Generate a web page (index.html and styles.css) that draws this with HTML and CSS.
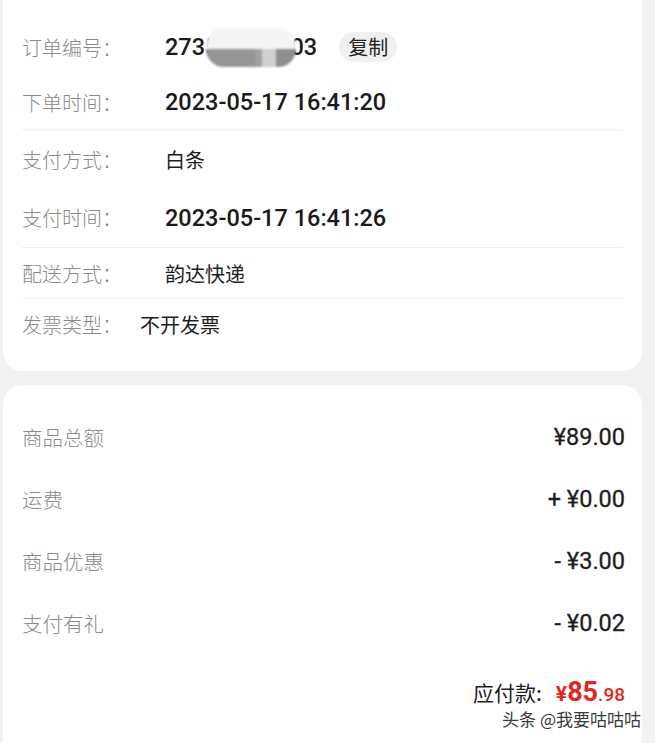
FILE: index.html
```html
<!DOCTYPE html>
<html>
  <head>
    <title>订单详情</title>
    <link rel="stylesheet" href="styles.css">
  </head>
  <body>
    <div class="page">
      <div class="card info">
        <div class="row r1">
          <span class="label">订单编号：</span>
          <span class="value num order">2735<span class="mask"></span>03</span>
          <span class="copy">复制</span>
        </div>
        <div class="row r2 line">
          <span class="label">下单时间：</span>
          <span class="value num">2023-05-17 16:41:20</span>
        </div>
        <div class="row r3">
          <span class="label">支付方式：</span>
          <span class="value">白条</span>
        </div>
        <div class="row r4 line">
          <span class="label">支付时间：</span>
          <span class="value num">2023-05-17 16:41:26</span>
        </div>
        <div class="row r5 line">
          <span class="label">配送方式：</span>
          <span class="value">韵达快递</span>
        </div>
        <div class="row r6">
          <span class="label short">发票类型：</span>
          <span class="value">不开发票</span>
        </div>
      </div>

      <div class="card bill">
        <div class="bill-row">
          <span class="label">商品总额</span>
          <span class="amount">¥89.00</span>
        </div>
        <div class="bill-row">
          <span class="label">运费</span>
          <span class="amount">+ ¥0.00</span>
        </div>
        <div class="bill-row">
          <span class="label">商品优惠</span>
          <span class="amount">- ¥3.00</span>
        </div>
        <div class="bill-row">
          <span class="label">支付有礼</span>
          <span class="amount">- ¥0.02</span>
        </div>
        <div class="pay-row">
          <span class="pay-label">应付款:</span>
          <span class="pay-total"><span class="yen">¥</span><span class="big">85</span><span class="cents">.98</span></span>
        </div>
      </div>
    </div>

    <div class="watermark">头条 @我要咕咕咕</div>
  </body>
</html>
```

FILE: styles.css
```css
body {
  margin: 0;
  height: 743px;
  overflow: hidden;
  position: relative;
  background-color: #f2f2f2;
  font-family: "Noto Sans CJK SC", sans-serif;
  color: #222;
}

.page {
  padding: 0 13px 0 3px;
}

.card {
  background-color: #fff;
  border-radius: 20px;
}

/* верхняя карточка, её верх уходит за край экрана */
.info {
  margin-top: -24px;
  padding: 43px 19px 22px 19px;
}

.row {
  display: flex;
  align-items: center;
}

.r1 { height: 56px; }
.r2 { height: 54px; }
.r3 { height: 58px; }
.r4 { height: 59px; }
.r5 { height: 50px; }
.r6 { height: 50px; }

.line {
  border-bottom: 1px solid #efefef;
}

.label {
  flex: none;
  width: 143px;
  font-size: 20px;
  font-weight: 300;
  color: #8a8a8a;
}

.label.short {
  width: 118px;
}

.value {
  font-size: 20px;
  color: #1e1e1e;
}

.num {
  font-family: Roboto, "Noto Sans CJK SC", sans-serif;
  font-weight: 500;
  font-size: 23.5px;
  color: #1a1a1a;
}

.order {
  display: flex;
  align-items: center;
}

.mask {
  display: inline-block;
  width: 90px;
  height: 39px;
  margin: 0 -6px 0 -12px;
  border-radius: 18px;
  background:
    linear-gradient(to right, #959595 0 55%, #a0a0a0 55% 62%, #cfcfcf 62% 78%, #8e8e8e 78% 100%) bottom / 100% 46% no-repeat,
    #f5f5f5;
  filter: blur(0.8px);
}

.copy {
  margin-left: 22px;
  padding: 0 9px;
  height: 30px;
  line-height: 30px;
  border-radius: 15px;
  background-color: #f0f0f0;
  font-size: 20px;
  color: #222;
}

.bill {
  margin-top: 14px;
  padding: 21px 17px 60px 19px;
}

.bill-row {
  height: 62px;
  display: flex;
  align-items: center;
  justify-content: space-between;
}

.bill-row .label {
  width: auto;
  font-size: 20.5px;
}

.amount {
  font-family: Roboto, sans-serif;
  font-weight: 400;
  font-size: 23.5px;
  color: #1e1e1e;
  -webkit-text-stroke: 0.3px #1e1e1e;
}

.pay-row {
  margin-top: 20px;
  height: 36px;
  display: flex;
  align-items: center;
  justify-content: flex-end;
}

.pay-label {
  font-size: 21px;
  color: #1e1e1e;
}

.pay-total {
  margin-left: 14px;
  font-family: Roboto, sans-serif;
  font-weight: 700;
  color: #e3261d;
}

.yen {
  font-size: 21px;
}

.big {
  font-size: 27px;
}

.cents {
  font-size: 19px;
  font-weight: 500;
}

.watermark {
  position: absolute;
  right: 14px;
  bottom: 12px;
  font-size: 17px;
  color: #3a3a3a;
  text-shadow: 0 0 2px #fff, 0 0 2px #fff;
}
```
